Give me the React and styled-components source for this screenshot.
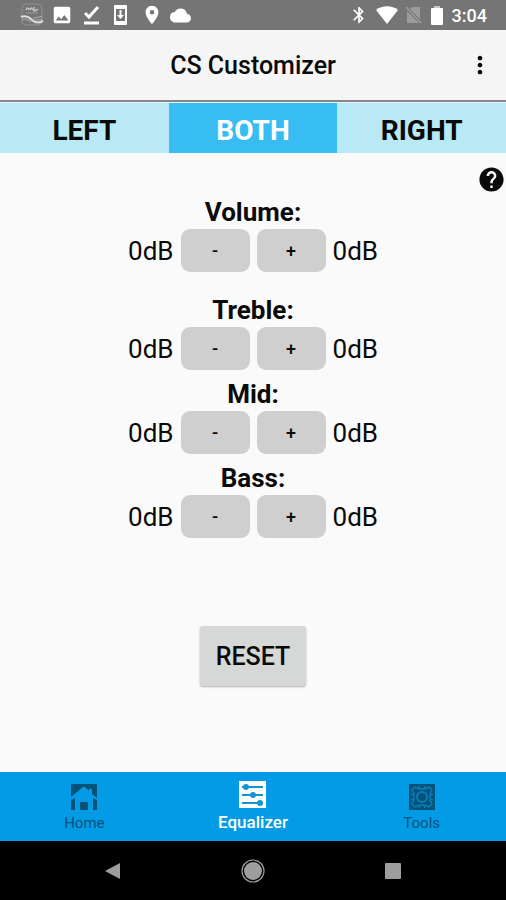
import React, { useState } from "react";
import styled, { createGlobalStyle } from "styled-components";
import {
  MdImage,
  MdLocationOn,
  MdCloud,
  MdBluetooth,
  MdMoreVert,
  MdHelp,
} from "react-icons/md";

const GlobalStyle = createGlobalStyle`
  * {
    box-sizing: border-box;
  }

  body {
    margin: 0;
    background-color: #fafafa;
    font-family: Roboto, "Liberation Sans", sans-serif;
    color: #0a0a0a;
  }

  button {
    border: none;
    padding: 0;
    color: inherit;
    font-family: inherit;
    cursor: pointer;
  }

  svg {
    display: block;
  }
`;

//layout
const Screen = styled.div`
  display: flex;
  flex-direction: column;
  min-height: 100vh;
`;

const StatusBar = styled.div`
  display: flex;
  align-items: center;
  justify-content: space-between;
  height: 30px;
  padding: 0 19px 0 20px;
  background-color: #757575;
  color: white;
`;

const StatusGroup = styled.div`
  display: flex;
  align-items: center;
  gap: 7px;
`;

const Header = styled.header`
  display: grid;
  grid-template-columns: 1fr auto 1fr;
  align-items: center;
  height: 72px;
  padding: 0 12px;
  border-bottom: 2px solid #88888c;
  background-color: #f5f5f5;
`;

const Tabs = styled.div`
  display: grid;
  grid-template-columns: repeat(3, 1fr);
  height: 51px;
  border-top: 1px solid #e4f4f8;
`;

const Main = styled.main`
  display: flex;
  flex: 1;
  flex-direction: column;
  align-items: center;
`;

const HelpRow = styled.div`
  display: flex;
  align-self: stretch;
  justify-content: flex-end;
  height: 42px;
  padding-top: 10px;
`;

const Band = styled.section`
  margin-bottom: ${(props) => (props.$spaced ? "21px" : "7px")};
`;

const BandRow = styled.div`
  display: flex;
  align-items: center;
  gap: 7px;
`;

const BottomNav = styled.nav`
  display: grid;
  grid-template-columns: repeat(3, 1fr);
  height: 69px;
  background-color: #039be5;
`;

const SystemBar = styled.div`
  display: flex;
  align-items: center;
  justify-content: center;
  gap: 120px;
  height: 59px;
  background-color: black;
  color: #9e9e9e;
`;

//text
const Time = styled.span`
  margin-left: 2px;
  font-size: 18px;
  font-weight: 500;
`;

const Title = styled.h1`
  grid-column: 2;
  margin: 0;
  font-size: 25px;
  font-weight: 500;
`;

const BandTitle = styled.h2`
  margin: 0;
  font-size: 26px;
  font-weight: 700;
  line-height: 34px;
  text-align: center;
`;

const Level = styled.span`
  font-size: 26px;
`;

//controls
const IconButton = styled.button`
  justify-self: end;
  background: none;
`;

const Tab = styled.button`
  padding-top: 4px;
  background-color: ${(props) => (props.$active ? "#37bdf2" : "#b9e9f5")};
  color: ${(props) => (props.$active ? "white" : "#0a0a0a")};
  font-size: 28px;
  font-weight: 700;
`;

const StepButton = styled.button`
  width: 69px;
  height: 43px;
  border-radius: 9px;
  background-color: #cfcfcf;
  font-size: 18px;
  font-weight: 500;
`;

const ResetButton = styled.button`
  height: 60px;
  margin: 81px 0 24px;
  padding: 0 16px;
  border-radius: 3px;
  background-color: #d6d7d7;
  box-shadow: 0 1px 2px rgba(0, 0, 0, 0.3);
  font-size: 25px;
  font-weight: 500;
`;

const NavLink = styled.a`
  display: flex;
  flex-direction: column;
  align-items: center;
  gap: 4px;
  padding-top: ${(props) => (props.$active ? "9px" : "12px")};
  color: ${(props) => (props.$active ? "white" : "#04517a")};
  font-size: ${(props) => (props.$active ? "17px" : "15px")};
  font-weight: ${(props) => (props.$active ? 500 : 400)};
  text-decoration: none;
`;

const SystemButton = styled.button`
  background: none;
`;

//icons
const AppBadge = () => (
  <svg width="24" height="24" viewBox="0 0 24 24" fill="none" stroke="#c4c4c4">
    <rect x="2" y="1" width="20" height="21" rx="4" stroke="#929292" />
    <path d="M6 7c1-3 3-2 3 0M10 7c1-3 2-2 3 0M14 4v4c2 0 3-1 4-2" strokeWidth="1.5" />
    <path d="M6 10h12" stroke="#999" />
    <path d="M1 14c5-2 8 0 11 3s7 3 11 1" stroke="#dcdcdc" strokeWidth="2" />
    <path d="M2 17c4-2 6 0 9 2M13 15c4 0 6-1 9-2M15 17c2 0 5 0 7-1" stroke="#b4b4b4" />
  </svg>
);

const DoneIcon = () => (
  <svg width="20" height="20" viewBox="0 0 20 20" fill="none" stroke="white">
    <path d="M5 8l4 4L18 2" strokeWidth="3" />
    <path d="M4 18h15" strokeWidth="3" />
  </svg>
);

const SystemUpdate = () => (
  <svg width="27" height="20" viewBox="0 0 27 20" fill="none">
    <rect x="7" width="13" height="20" rx="1" fill="white" />
    <rect x="9" y="4" width="9" height="12" fill="#757575" />
    <path d="M13.5 5v6" stroke="white" strokeWidth="2" />
    <path d="M10 10h7l-3.5 4z" fill="white" />
  </svg>
);

const Wifi = () => (
  <svg width="22" height="18" viewBox="0 0 22 18">
    <path d="M0 4C6-1 16-1 22 4L11 18z" fill="white" />
  </svg>
);

const NoSim = () => (
  <svg width="19" height="18" viewBox="0 0 19 18">
    <path d="M7 1h8v12L5 3zM2 5l12 12H2z" fill="#9c9c9c" />
    <path d="M1 1l15 16" stroke="#9c9c9c" strokeWidth="1.5" />
  </svg>
);

const Battery = () => (
  <svg width="12" height="19" viewBox="0 0 12 19">
    <path d="M3 0h6v2H3z" fill="#c8c8c8" />
    <rect y="2" width="12" height="17" rx="1" fill="white" />
  </svg>
);

const HomeIcon = () => (
  <svg width="26" height="26" viewBox="0 0 26 26" fill="currentColor">
    <path d="M0 0h26v14l-5-4V5h-3v2l-4-4h-2L0 13z" />
    <path d="M0 16l4-2v12H0zM22 14l4 2v10h-4zM9 18h8v8H9z" />
  </svg>
);

const EqualizerIcon = () => (
  <svg width="27" height="27" viewBox="0 0 27 27">
    <rect width="27" height="27" fill="white" />
    <g stroke="#1593d2" strokeWidth="2">
      <path d="M3 6h21M3 14h21M3 22h21" />
    </g>
    <g fill="#1593d2">
      <circle cx="7" cy="6" r="3" />
      <circle cx="14" cy="14" r="3" />
      <circle cx="21" cy="22" r="3" />
    </g>
  </svg>
);

const ToolsIcon = () => (
  <svg width="26" height="26" viewBox="0 0 26 26" fill="none" stroke="#087fb8">
    <rect width="26" height="26" fill="currentColor" stroke="none" />
    <path
      d="M10 2l1 3h4l1-3M16 5l4-2 3 3-2 4M24 10l-3 1v4l3 1M21 16l2 4-3 3-4-2M16 24l-1-3h-4l-1 3M10 21l-4 2-3-3 2-4M2 16l3-1v-4l-3-1M5 10L3 6l3-3 4 2"
      strokeWidth="1.5"
    />
    <circle cx="13" cy="13" r="5" strokeWidth="2" />
  </svg>
);

const BackIcon = () => (
  <svg width="16" height="18" viewBox="0 0 16 18" fill="currentColor">
    <path d="M0 9L15 1v16z" />
  </svg>
);

const CircleIcon = () => (
  <svg width="24" height="24" viewBox="0 0 24 24" fill="currentColor">
    <circle cx="12" cy="12" r="9" />
    <circle cx="12" cy="12" r="11" fill="none" stroke="currentColor" strokeWidth="1.2" />
  </svg>
);

const SquareIcon = () => (
  <svg width="16" height="16" viewBox="0 0 16 16" fill="currentColor">
    <rect width="16" height="16" rx="1" />
  </svg>
);

const sides = ["LEFT", "BOTH", "RIGHT"];
const bands = ["Volume", "Treble", "Mid", "Bass"];
const flat = { Volume: [0, 0], Treble: [0, 0], Mid: [0, 0], Bass: [0, 0] };

const App = () => {
  const [side, setSide] = useState("BOTH");
  const [levels, setLevels] = useState(flat);

  const step = (band, amount) => {
    const [left, right] = levels[band];
    setLevels({
      ...levels,
      [band]: [
        side === "RIGHT" ? left : left + amount,
        side === "LEFT" ? right : right + amount,
      ],
    });
  };

  return (
    <Screen>
      <GlobalStyle />
      <StatusBar>
        <StatusGroup>
          <AppBadge />
          <MdImage size={22} />
          <DoneIcon />
          <SystemUpdate />
          <MdLocationOn size={22} />
          <MdCloud size={21} />
        </StatusGroup>
        <StatusGroup>
          <MdBluetooth size={20} />
          <Wifi />
          <NoSim />
          <Battery />
          <Time>3:04</Time>
        </StatusGroup>
      </StatusBar>

      <Header>
        <Title>CS Customizer</Title>
        <IconButton aria-label="More options">
          <MdMoreVert size={28} />
        </IconButton>
      </Header>

      <Tabs role="tablist">
        {sides.map((name) => (
          <Tab
            key={name}
            role="tab"
            aria-selected={name === side}
            $active={name === side}
            onClick={() => setSide(name)}
          >
            {name}
          </Tab>
        ))}
      </Tabs>

      <Main>
        <HelpRow>
          <IconButton aria-label="Help">
            <MdHelp size={29} />
          </IconButton>
        </HelpRow>
        {bands.map((band) => (
          <Band key={band} $spaced={band === "Volume"}>
            <BandTitle>{band}:</BandTitle>
            <BandRow>
              <Level>{levels[band][0]}dB</Level>
              <StepButton aria-label={`${band} down`} onClick={() => step(band, -1)}>
                -
              </StepButton>
              <StepButton aria-label={`${band} up`} onClick={() => step(band, 1)}>
                +
              </StepButton>
              <Level>{levels[band][1]}dB</Level>
            </BandRow>
          </Band>
        ))}
        <ResetButton onClick={() => setLevels(flat)}>RESET</ResetButton>
      </Main>

      <BottomNav>
        <NavLink href="#home">
          <HomeIcon />
          Home
        </NavLink>
        <NavLink href="#equalizer" $active>
          <EqualizerIcon />
          Equalizer
        </NavLink>
        <NavLink href="#tools">
          <ToolsIcon />
          Tools
        </NavLink>
      </BottomNav>

      <SystemBar>
        <SystemButton aria-label="Back">
          <BackIcon />
        </SystemButton>
        <SystemButton aria-label="Home screen">
          <CircleIcon />
        </SystemButton>
        <SystemButton aria-label="Recent apps">
          <SquareIcon />
        </SystemButton>
      </SystemBar>
    </Screen>
  );
};

export default App;
